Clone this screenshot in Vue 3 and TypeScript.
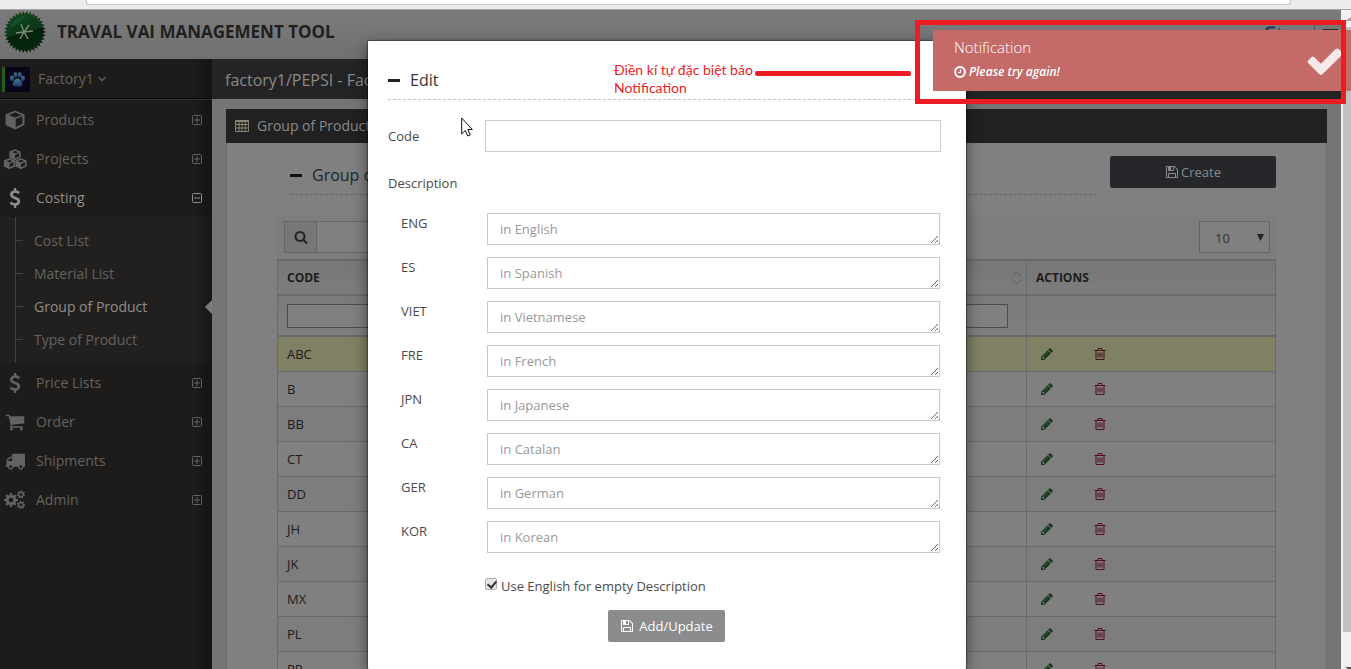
<script setup lang="ts">
import { ref } from 'vue'

interface MenuItem {
  label: string
  icon: string
  open?: boolean
  children?: string[]
}

const menu: MenuItem[] = [
  { label: 'Products', icon: 'cube' },
  { label: 'Projects', icon: 'cubes' },
  {
    label: 'Costing',
    icon: 'dollar',
    open: true,
    children: ['Cost List', 'Material List', 'Group of Product', 'Type of Product'],
  },
  { label: 'Price Lists', icon: 'dollar' },
  { label: 'Order', icon: 'cart' },
  { label: 'Shipments', icon: 'truck' },
  { label: 'Admin', icon: 'cogs' },
]
const activeChild = 'Group of Product'

const codes = ['ABC', 'B', 'BB', 'CT', 'DD', 'JH', 'JK', 'MX', 'PL', 'PP']

const languages = [
  { key: 'ENG', name: 'English' },
  { key: 'ES', name: 'Spanish' },
  { key: 'VIET', name: 'Vietnamese' },
  { key: 'FRE', name: 'French' },
  { key: 'JPN', name: 'Japanese' },
  { key: 'CA', name: 'Catalan' },
  { key: 'GER', name: 'German' },
  { key: 'KOR', name: 'Korean' },
]

const useEnglish = ref(true)
const pageSize = ref('10')

function star(cx: number, cy: number, teeth: number, outer: number, inner: number): string {
  const pts: string[] = []
  for (let i = 0; i < teeth * 2; i++) {
    const r = i % 2 ? inner : outer
    const a = (Math.PI * i) / teeth
    pts.push(`${(cx + r * Math.cos(a)).toFixed(2)} ${(cy + r * Math.sin(a)).toFixed(2)}`)
  }
  return 'M' + pts.join('L') + 'Z'
}

function gear(cx: number, cy: number, teeth: number, outer: number, inner: number, hole: number, turn = 0): string {
  const pts: string[] = []
  const step = (Math.PI * 2) / teeth
  const at = (r: number, a: number) => `${(cx + r * Math.cos(a)).toFixed(2)} ${(cy + r * Math.sin(a)).toFixed(2)}`
  for (let i = 0; i < teeth; i++) {
    const a = i * step + turn
    pts.push(at(inner, a - step * 0.3), at(outer, a - step * 0.2), at(outer, a + step * 0.2), at(inner, a + step * 0.3))
  }
  return `M${pts.join('L')}ZM${cx - hole} ${cy}a${hole} ${hole} 0 1 0 ${hole * 2} 0a${hole} ${hole} 0 1 0 ${-hole * 2} 0Z`
}

const sealPath = star(22, 22, 34, 21, 18)
const cogsPath = gear(7, 11, 8, 7, 5.2, 2.3) + gear(17, 5.5, 7, 4.2, 3, 1.4, 0.3) + gear(17, 16, 7, 4.2, 3, 1.4)

const paths: Record<string, string> = {
  floppy:
    'M512 1536h768v-384h-768v384zm896 0h128v-896q0-14-10-38.5t-20-34.5l-281-281q-10-10-34-20t-39-10v416q0 40-28 68t-68 28h-576q-40 0-68-28t-28-68v-416h-128v1280h128v-416q0-40 28-68t68-28h832q40 0 68 28t28 68v416zm-384-928v-320q0-13-9.5-22.5t-22.5-9.5h-192q-13 0-22.5 9.5t-9.5 22.5v320q0 13 9.5 22.5t22.5 9.5h192q13 0 22.5-9.5t9.5-22.5zm640 32v928q0 40-28 68t-68 28h-1344q-40 0-68-28t-28-68v-1344q0-40 28-68t68-28h928q40 0 88 20t76 48l280 280q28 28 48 76t20 88z',
  check:
    'M1671 566q0 40-28 68l-724 724-136 136q-28 28-68 28t-68-28l-136-136-362-362q-28-28-28-68t28-68l136-136q28-28 68-28t68 28l294 295 656-657q28-28 68-28t68 28l136 136q28 28 28 68z',
  search:
    'M1216 832q0-185-131.5-316.5t-316.5-131.5-316.5 131.5-131.5 316.5 131.5 316.5 316.5 131.5 316.5-131.5 131.5-316.5zm512 832q0 52-38 90t-90 38q-54 0-90-38l-343-342q-179 124-399 124-143 0-273.5-55.5t-225-150-150-225-55.5-273.5 55.5-273.5 150-225 225-150 273.5-55.5 273.5 55.5 225 150 150 225 55.5 273.5q0 220-124 399l343 343q37 37 37 90z',
  pencil:
    'M491 1536l91-91-235-235-91 91v107h128v128h107zm523-928q0-22-22-22-10 0-17 7l-542 542q-7 7-7 17 0 22 22 22 10 0 17-7l542-542q7-7 7-17zm-54-192l416 416-832 832h-416v-416zm683 96q0 53-37 90l-166 166-416-416 166-165q36-38 90-38 53 0 91 38l235 234q37 39 37 91z',
  trash:
    'M704 736v576q0 14-9 23t-23 9h-64q-14 0-23-9t-9-23v-576q0-14 9-23t23-9h64q14 0 23 9t9 23zm256 0v576q0 14-9 23t-23 9h-64q-14 0-23-9t-9-23v-576q0-14 9-23t23-9h64q14 0 23 9t9 23zm256 0v576q0 14-9 23t-23 9h-64q-14 0-23-9t-9-23v-576q0-14 9-23t23-9h64q14 0 23 9t9 23zm128 724v-948h-896v948q0 22 7 40.5t14.5 27 10.5 8.5h832q3 0 10.5-8.5t14.5-27 7-40.5zm-672-1076h448l-48-117q-7-9-17-11h-317q-10 2-17 11zm928 32v64q0 14-9 23t-23 9h-96v948q0 83-47 143.5t-113 60.5h-832q-66 0-113-58.5t-47-141.5v-952h-96q-14 0-23-9t-9-23v-64q0-14 9-23t23-9h309l70-167q15-37 54-63t79-26h320q40 0 79 26t54 63l70 167h309q14 0 23 9t9 23z',
  cart:
    'M704 1536q0 52-38 90t-90 38-90-38-38-90 38-90 90-38 90 38 38 90zm896 0q0 52-38 90t-90 38-90-38-38-90 38-90 90-38 90 38 38 90zm128-1088v512q0 24-16.5 42.5t-40.5 21.5l-1044 122q13 60 13 70 0 16-24 64h920q26 0 45 19t19 45-19 45-45 19h-1024q-26 0-45-19t-19-45q0-11 8-31.5t16-36 21.5-40 15.5-29.5l-177-823h-204q-26 0-45-19t-19-45 19-45 45-19h256q16 0 28.5 6.5t19.5 15.5 13 24.5 8 26 5.5 29.5 4.5 26h1201q26 0 45 19t19 45z',
  truck:
    'M640 1408q0-52-38-90t-90-38-90 38-38 90 38 90 90 38 90-38 38-90zm-384-512h384v-256h-158q-13 0-22 9l-195 195q-9 9-9 22v30zm1280 512q0-52-38-90t-90-38-90 38-38 90 38 90 90 38 90-38 38-90zm256-1088v1024q0 15-4 26.5t-13.5 18.5-16.5 11.5-23.5 6-22.5 2-25.5 0-22.5-.5q0 106-75 181t-181 75-181-75-75-181h-384q0 106-75 181t-181 75-181-75-75-181h-64q-3 0-22.5.5t-25.5 0-22.5-2-23.5-6-16.5-11.5-13.5-18.5-4-26.5q0-26 19-45t45-19v-320q0-8-.5-35t0-38 2.5-34.5 6.5-37 14-30.5 22.5-30l198-198q19-19 50.5-32t58.5-13h160v-192q0-26 19-45t45-19h1024q26 0 45 19t19 45z',
  dollar:
    'M1362 1185q0 153-99.5 263.5t-258.5 136.5v175q0 14-9 23t-23 9h-135q-13 0-22.5-9.5t-9.5-22.5v-175q-66-9-127.5-31t-101.5-44.5-74-48-46.5-37.5-17.5-18q-17-21-2-41l103-135q7-10 23-12 15-2 24 9l2 2q113 99 243 125 37 8 74 8 81 0 142.5-43t61.5-122q0-28-15-53t-33.5-42-58.5-37.5-66-32-80-32.5q-39-16-61.5-25t-61.5-26.5-62.5-31-56.5-35.5-53.5-42.5-43.5-49-35.5-58-21-66.5-8.500-78q0-138 98-242t255-134v-180q0-13 9.500-22.500t22.500-9.500h135q14 0 23 9t9 23v176q57 6 110.500 23t87 33.500 63.500 37.500 39 29 15 14q17 18 5 38l-81 146q-8 15-23 16-14 3-27-7-3-3-14.500-12t-39-26.500-58.500-32-74.500-26-85.500-11.500q-95 0-155 43t-60 111q0 26 8.500 48t29.500 41.500 39.500 33 56 31 60.500 27 70 27.500q53 20 81 31.500t76 35 75.500 42.500 62 50 53 63.500 31.500 76.500 13 94z',
}
</script>

<template>
  <div class="screen">
    <div class="chrome"><div class="address"></div></div>

    <div class="window">
      <div class="app">
        <header class="topbar">
          <svg class="seal" viewBox="0 0 44 44" aria-hidden="true">
            <defs>
              <linearGradient id="seal" x1="0.2" y1="0" x2="0.5" y2="1">
                <stop offset="0" stop-color="#12471f" />
                <stop offset="0.55" stop-color="#0b3617" />
                <stop offset="0.56" stop-color="#04210c" />
                <stop offset="1" stop-color="#06290f" />
              </linearGradient>
            </defs>
            <path :d="sealPath" fill="url(#seal)" />
            <path d="M7 18Q11 6 24 5Q19 12 7 18Z" fill="#1b5e2c" opacity="0.6" />
            <path
              d="M21 22L18 14M21 22L26 15M21 22L30 21M21 22L25 29M21 22L17 29M21 22L13 23"
              stroke="#7c8a76" stroke-width="1.4" fill="none"
            />
          </svg>
          <h1>TRAVAL VAI MANAGEMENT TOOL</h1>
          <div class="tools">
            <button type="button" class="tool" aria-label="Sign out">
              <svg width="20" height="18" viewBox="0 0 20 18">
                <path d="M10 1.500H4.500Q1.500 1.500 1.500 4.500V13Q1.500 16.500 4.500 16.500H10" fill="none" stroke="#1d3350" stroke-width="2" />
                <path d="M14 2l6 6-6 6v-3.500H7v-5h7z" fill="#1d3350" />
              </svg>
            </button>
            <button type="button" class="tool menu-tool" aria-label="Menu">
              <svg width="15" height="12" viewBox="0 0 15 12"><path d="M0 1h15M0 6h15M0 11h15" stroke="#2a2a2a" stroke-width="2" /></svg>
            </button>
          </div>
        </header>

        <div class="body">
          <aside class="sidebar">
            <button type="button" class="account">
              <svg class="avatar" viewBox="0 0 25 25" aria-hidden="true">
                <defs>
                  <linearGradient id="paw" x1="0" y1="0" x2="0" y2="1">
                    <stop offset="0" stop-color="#45808c" />
                    <stop offset="1" stop-color="#1f3372" />
                  </linearGradient>
                </defs>
                <rect width="25" height="25" fill="#080618" />
                <g fill="url(#paw)">
                  <ellipse cx="7" cy="11.500" rx="2" ry="2.800" />
                  <ellipse cx="10.500" cy="8" rx="1.900" ry="2.700" />
                  <ellipse cx="14.800" cy="8" rx="1.900" ry="2.700" />
                  <ellipse cx="18" cy="11.500" rx="1.900" ry="2.800" />
                  <path d="M12.500 11.500q2.500 0 4.300 3.500 1.500 4-1.600 4.500h-5.400q-3.300-.5-1.600-4.500 1.800-3.500 4.300-3.500z" />
                </g>
              </svg>
              <span>Factory1</span>
              <svg width="8" height="6" viewBox="0 0 8 6" aria-hidden="true"><path d="M.5 1l3.500 3.500L7.500 1" fill="none" stroke="currentColor" stroke-width="1.300" /></svg>
            </button>

            <nav>
              <template v-for="item in menu" :key="item.label">
                <a href="#" class="item" :class="{ open: item.open }">
                  <span class="glyph">
                    <svg v-if="item.icon === 'cube'" width="20" height="20" viewBox="0 0 20 20">
                      <path d="M10 1.500L18.500 5v9.500L10 18.500 1.500 14.500V5z" fill="none" stroke="currentColor" stroke-width="1.800" stroke-linejoin="round" />
                      <path d="M1.500 5L10 8.500 18.500 5v9.500L10 18.500V9" fill="none" stroke="currentColor" stroke-width="1.400" />
                      <path d="M10 8.500L1.500 5v9.500L10 18.500z" fill="currentColor" />
                    </svg>
                    <svg v-else-if="item.icon === 'cubes'" width="24" height="20" viewBox="0 0 24 20">
                      <g v-for="(p, i) in [[6.500, 0.500], [1, 9.500], [12.500, 9.500]]" :key="i" :transform="`translate(${p[0]} ${p[1]})`">
                        <path d="M5.500 .5L10.300 2.500V7.500L5.500 9.800.7 7.500V2.500z" fill="none" stroke="currentColor" stroke-width="1.600" stroke-linejoin="round" />
                        <path d="M.7 2.500L5.500 4.700 10.300 2.500" fill="none" stroke="currentColor" stroke-width="1.300" />
                        <path d="M5.500 4.700L.7 2.500v5l4.800 2.300z" fill="currentColor" />
                      </g>
                    </svg>
                    <svg v-else-if="item.icon === 'cogs'" width="22" height="21" viewBox="0 0 22 21">
                      <path :d="cogsPath" fill="currentColor" fill-rule="evenodd" />
                    </svg>
                    <svg v-else width="20" height="20" viewBox="0 0 1792 1792"><path :d="paths[item.icon]" fill="currentColor" /></svg>
                  </span>
                  <span class="label">{{ item.label }}</span>
                  <svg class="toggle" width="10" height="10" viewBox="0 0 10 10" aria-hidden="true">
                    <rect x=".5" y=".5" width="9" height="9" rx="1" fill="none" stroke="currentColor" />
                    <path :d="item.open ? 'M2 5h6' : 'M2 5h6M5 2v6'" stroke="currentColor" />
                  </svg>
                </a>
                <div v-if="item.children" class="submenu">
                  <a v-for="c in item.children" :key="c" href="#" :class="{ active: c === activeChild }">{{ c }}</a>
                </div>
              </template>
            </nav>
          </aside>

          <main class="main">
            <div class="crumbs">factory1/PEPSI - Fac</div>
            <section class="panel">
              <h2 class="panel-head">
                <svg width="14" height="12" viewBox="0 0 14 12" aria-hidden="true">
                  <path d="M.5.500h13v11H.5zM.5 1.500h13M.5 4.500h13M.5 8h13M4 1v10.500M7 1v10.500M10.300 1v10.500" fill="none" stroke="#8a8570" />
                </svg>
                Group of Product
              </h2>
              <div class="panel-body">
                <div class="title-row">
                  <h3 class="title"><i class="dash"></i>Group of Product</h3>
                  <button type="button" class="create">
                    <svg width="14" height="14" viewBox="0 0 1792 1792" aria-hidden="true"><path :d="paths.floppy" fill="currentColor" /></svg>
                    Create
                  </button>
                </div>

                <div class="toolbar">
                  <label class="search">
                    <span class="addon"><svg width="14" height="14" viewBox="0 0 1792 1792"><path :d="paths.search" fill="currentColor" /></svg></span>
                    <input type="search" aria-label="Search" />
                  </label>
                  <span class="size">
                    <select v-model="pageSize" aria-label="Rows per page"><option>10</option></select>
                    <svg width="7" height="7" viewBox="0 0 7 7" aria-hidden="true"><path d="M0 0h7L3.500 7z" fill="#222" /></svg>
                  </span>
                </div>

                <table>
                  <thead>
                    <tr class="heads">
                      <th class="c-code">CODE</th>
                      <th class="c-desc">
                        <svg width="11" height="14" viewBox="0 0 11 14" aria-label="Sort"><path d="M1 5.500L5.500 1 10 5.500M1 8.500L5.500 13 10 8.500" fill="none" stroke="#616161" /></svg>
                      </th>
                      <th class="c-act">ACTIONS</th>
                    </tr>
                    <tr class="filters">
                      <td><input type="text" aria-label="Filter code" /></td>
                      <td><input type="text" aria-label="Filter description" /></td>
                      <td></td>
                    </tr>
                  </thead>
                  <tbody>
                    <tr v-for="(code, i) in codes" :key="code" :class="{ picked: i === 0 }">
                      <td>{{ code }}</td>
                      <td></td>
                      <td>
                        <div class="acts">
                          <button type="button" class="edit" aria-label="Edit row">
                            <svg width="14" height="14" viewBox="0 0 1792 1792"><path :d="paths.pencil" fill="currentColor" /></svg>
                          </button>
                          <button type="button" class="del" aria-label="Delete row">
                            <svg width="14" height="14" viewBox="0 0 1792 1792"><path :d="paths.trash" fill="currentColor" /></svg>
                          </button>
                        </div>
                      </td>
                    </tr>
                  </tbody>
                </table>
              </div>
            </section>
          </main>
        </div>
      </div>

      <div class="scrollbar" aria-hidden="true">
        <i class="up"></i>
        <div class="thumb"></div>
        <i class="down"></i>
      </div>
    </div>

    <div class="overlay">
      <form class="modal" role="dialog" aria-label="Edit" @submit.prevent>
        <h3 class="title"><i class="dash"></i>Edit</h3>
        <div class="code-row">
          <label for="code">Code</label>
          <input id="code" type="text" />
        </div>
        <p class="group-label">Description</p>
        <div class="langs">
          <div v-for="l in languages" :key="l.key" class="lang">
            <label :for="'d-' + l.key">{{ l.key }}</label>
            <textarea :id="'d-' + l.key" rows="1" :placeholder="'in ' + l.name"></textarea>
          </div>
        </div>
        <label class="check">
          <input v-model="useEnglish" type="checkbox" />
          <span>Use English for empty Description</span>
        </label>
        <div class="submit-row">
          <button type="submit" class="submit">
            <svg width="14" height="14" viewBox="0 0 1792 1792" aria-hidden="true"><path :d="paths.floppy" fill="currentColor" /></svg>
            Add/Update
          </button>
        </div>
      </form>
    </div>

    <div class="toast" role="alert">
      <div>
        <div class="toast-title">Notification</div>
        <div class="toast-text">
          <svg width="12" height="12" viewBox="0 0 12 12" aria-hidden="true">
            <circle cx="6" cy="6" r="4.900" fill="none" stroke="#fff" stroke-width="2" />
            <path d="M6.500 3.200V6.500H4" fill="none" stroke="#fff" stroke-width="1.200" />
          </svg>
          Please try again!
        </div>
      </div>
      <svg class="tick" width="40" height="40" viewBox="0 0 1792 1792" aria-hidden="true"><path :d="paths.check" fill="#f8e9e9" /></svg>
    </div>

    <div class="frame"></div>
    <div class="note">Điền kí tự đặc biệt báo<br />Notification</div>
    <div class="pointer-line"></div>
    <svg class="cursor" width="12" height="20" viewBox="0 0 12 20" aria-hidden="true">
      <path d="M.7 1v16l3.600-3.500 2.500 5.500 2.400-1-2.400-5.500h4.500z" fill="#fff" stroke="#111" stroke-linejoin="round" />
    </svg>
  </div>
</template>

<style>
body {
  margin: 0;
}
</style>

<style scoped>
* {
  box-sizing: border-box;
}
.screen {
  position: relative;
  display: flex;
  flex-direction: column;
  height: 100vh;
  overflow: hidden;
  font: 13px/20px 'Open Sans', 'Noto Sans', sans-serif;
  color: #4a4a4a;
}
h1, h2, h3, p {
  margin: 0;
  font-weight: 400;
}
a {
  color: inherit;
  text-decoration: none;
}
button, input, select, textarea {
  font: inherit;
  color: inherit;
}
button {
  padding: 0;
  border: 0;
  background: none;
}
svg {
  flex: none;
  display: block;
}

.chrome {
  flex: none;
  height: 10px;
  padding: 0 60px 0 86px;
  background: #ececec;
  border-bottom: 1px solid #a3a3a3;
}
.address {
  height: 5px;
  background: #fff;
  border: 1px solid #c4c4c4;
  border-top: 0;
  border-radius: 0 0 3px 3px;
}
.window {
  flex: 1;
  min-height: 0;
  display: flex;
}
.app {
  flex: 1;
  min-width: 0;
  display: flex;
  flex-direction: column;
  overflow: hidden;
}
.topbar {
  flex: none;
  display: flex;
  align-items: center;
  height: 49px;
  padding: 0 3px;
  background: linear-gradient(#7b7b7b, #707070);
}
.seal {
  width: 44px;
  height: 44px;
  margin-bottom: 5px;
}
h1 {
  margin: 0 auto 5px 10px;
  font-size: 17px;
  font-weight: 700;
  color: #1f1f1f;
}
.tools {
  display: flex;
  align-items: center;
  height: 100%;
}
.tool {
  height: 20px;
  padding: 0 29px 0 0;
}
.menu-tool {
  height: 30px;
  padding: 0 0 0 8px;
  border-left: 1px solid #585858;
}

.body {
  flex: 1;
  min-height: 0;
  display: flex;
}
.sidebar {
  flex: none;
  width: 212px;
  background: linear-gradient(90deg, transparent 195px, rgba(0, 0, 0, 0.3)), #1d1c1a;
  color: #646260;
  font-size: 14px;
}
.account {
  display: flex;
  align-items: center;
  gap: 4px;
  width: 100%;
  height: 41px;
  padding: 0 2px;
  border-bottom: 1px solid #343230;
  box-shadow: inset 0 -1px #090909;
  font-size: 14px;
  color: #646260;
}
.avatar {
  width: 28px;
  height: 25px;
  margin-right: 4px;
  border-left: 3px solid #235d18;
}
.item {
  display: flex;
  align-items: center;
  height: 39px;
  padding-right: 10px;
}
.glyph {
  display: flex;
  justify-content: center;
  width: 30px;
  margin-right: 6px;
}
.label {
  flex: 1;
}
.item.open {
  color: #8f8d8b;
}
.submenu {
  position: relative;
  padding: 7px 0;
  background: linear-gradient(90deg, transparent 195px, rgba(0, 0, 0, 0.3)), #21201e;
}
.submenu::before {
  content: '';
  position: absolute;
  inset: 0 auto 0 15px;
  width: 1px;
  background: #444240;
}
.submenu a {
  position: relative;
  display: flex;
  align-items: center;
  height: 33px;
  padding-left: 34px;
}
.submenu a::before {
  content: '';
  position: absolute;
  left: 16px;
  top: 16px;
  width: 7px;
  height: 1px;
  background: #444240;
}
.submenu a.active {
  color: #8f8d8b;
}
.submenu a.active::after {
  content: '';
  position: absolute;
  right: 0;
  top: 10px;
  border: 7px solid transparent;
  border-left: 0;
  border-right-color: #7c7c7c;
}

.main {
  flex: 1;
  min-width: 0;
  background: #757575;
}
.crumbs {
  height: 40px;
  padding: 0 13px;
  background: #242424;
  color: #8a8a8a;
  font-size: 16px;
  line-height: 42px;
}
.panel {
  margin: 10px 14px 0;
}
.panel-head {
  display: flex;
  align-items: center;
  gap: 8px;
  height: 34px;
  padding: 0 9px;
  background: #212121;
  color: #8a8a8a;
  font-size: 14px;
}
.panel-body {
  padding: 13px 50px 0;
  background: #808080;
  border: solid #6a6a6a;
  border-width: 0 1px;
}
.title {
  display: flex;
  align-items: center;
  gap: 10px;
  height: 39px;
  border-bottom: 1px dashed #c4c4c4;
  font-size: 16px;
  color: #333;
}
.dash {
  width: 12px;
  height: 3px;
  background: #222;
}
.title-row {
  display: flex;
  align-items: flex-start;
  gap: 13px;
  padding-left: 13px;
  margin-bottom: 20px;
}
.title-row .title {
  flex: 1;
  border-color: #656565;
  color: #1b2633;
}
.title-row .dash {
  background: #111;
}
.create {
  display: flex;
  align-items: center;
  justify-content: center;
  gap: 2px;
  width: 166px;
  height: 32px;
  border-radius: 2px;
  background: #25272a;
  color: #8a8a8a;
}
.toolbar {
  display: flex;
  justify-content: space-between;
  align-items: center;
  height: 44px;
  padding: 0 6px 0 7px;
  background: #7d7d7d;
}
.search {
  display: flex;
  width: 300px;
  height: 32px;
  border: 1px solid #666;
}
.addon {
  display: flex;
  align-items: center;
  justify-content: center;
  width: 32px;
  border-right: 1px solid #666;
  background: #777;
  color: #252525;
}
.search input {
  flex: 1;
  min-width: 0;
  border: 0;
  background: #808080;
}
.size {
  position: relative;
}
.size select {
  display: block;
  appearance: none;
  width: 71px;
  height: 32px;
  padding: 2px 15px 0;
  border: 1px solid #666;
  border-radius: 0;
  background: #808080;
  color: #303030;
}
.size svg {
  position: absolute;
  right: 6px;
  top: 13px;
}

table {
  width: 100%;
  table-layout: fixed;
  border-spacing: 0;
  border: solid #6a6a6a;
  border-width: 2px 1px 0;
  color: #1c1c1c;
}
th, td {
  padding: 0 9px;
  border-bottom: 1px solid #6a6a6a;
  text-align: left;
}
th:last-child, td:last-child {
  border-left: 1px solid #6a6a6a;
}
.c-code {
  width: 24%;
}
.c-act {
  width: 249px;
}
.heads th {
  height: 35px;
  border-bottom-width: 2px;
  background: linear-gradient(#777, #7d7d7d);
  font-size: 12px;
  font-weight: 700;
}
.heads .c-desc {
  padding-right: 4px;
}
.c-desc svg {
  margin-left: auto;
}
.filters td {
  height: 41px;
  border-bottom-width: 2px;
  background: linear-gradient(#7a7a7a, #7f7f7f);
}
.filters input {
  display: block;
  width: 100%;
  height: 24px;
  border: 1px solid #4c4c4c;
  background: #808080;
}
.filters td:nth-child(2) {
  padding-right: 18px;
}
tbody td {
  height: 35px;
  background: #808080;
}
tbody tr:nth-child(odd) td {
  background: #7d7d7d;
}
tbody tr.picked td {
  background: #808064;
}
.acts {
  display: flex;
  gap: 39px;
  padding-left: 4px;
}
.edit {
  color: #1a3a1f;
}
.del {
  color: #560a1c;
}
.picked .del {
  color: #3f1216;
}

.scrollbar {
  flex: none;
  display: flex;
  flex-direction: column;
  width: 10px;
  padding-left: 2px;
  background: #f1f1f1;
  overflow: hidden;
}
.up, .down {
  flex: none;
  height: 4px;
  margin: 7px 0 6px 2px;
  border: 6px solid transparent;
  border-top: 0;
  border-bottom: 4px solid #a3a3a3;
}
.down {
  margin: 0 0 -2px 2px;
  border-bottom: 0;
  border-top: 4px solid #505050;
}
.thumb {
  flex: 1;
  margin-bottom: 35px;
  background: #c1c1c1;
}

.overlay {
  position: absolute;
  inset: 10px 17px 0 0;
  display: flex;
  justify-content: center;
  padding-top: 31px;
}
.modal {
  width: 598px;
  padding: 20px 25px 0 20px;
  background: #fff;
  border-radius: 1px;
  box-shadow: 0 0 1px 1px rgba(0, 0, 0, 0.35), 0 5px 15px rgba(0, 0, 0, 0.5);
}
.modal .title {
  margin-bottom: 20px;
}
.code-row {
  display: flex;
  align-items: center;
}
.code-row label {
  width: 97px;
}
.code-row input {
  flex: 1;
  height: 32px;
  border: 1px solid #ccc;
}
.group-label {
  margin: 21px 0 20px;
}
.langs {
  display: flex;
  flex-direction: column;
  gap: 12px;
  padding: 0 1px 0 13px;
}
.lang {
  display: flex;
  align-items: flex-start;
}
.lang label {
  width: 86px;
}
.lang textarea {
  flex: 1;
  height: 32px;
  padding: 5px 12px;
  border: 1px solid #c8c8c8;
  border-radius: 0;
  line-height: 20px;
  overflow: hidden;
  resize: vertical;
}
.lang textarea::placeholder {
  color: #999;
}
.check {
  display: flex;
  gap: 4px;
  margin: 23px 0 14px 97px;
}
.check input {
  appearance: none;
  width: 12px;
  height: 12px;
  margin: 2px 0 0;
  border: 1px solid #b0b0b0;
  border-radius: 2px;
  background: #e6e6e6;
}
.check input:checked::after {
  content: '';
  display: block;
  width: 4px;
  height: 7px;
  margin: 0 3px;
  border: solid #333;
  border-width: 0 2px 2px 0;
  transform: rotate(40deg);
}
.submit-row {
  display: flex;
  justify-content: center;
  padding-left: 4px;
}
.submit {
  display: flex;
  align-items: center;
  gap: 5px;
  height: 32px;
  padding: 0 12px;
  border-radius: 2px;
  background: #8b8c8e;
  color: #fff;
}

.toast {
  position: absolute;
  top: 30px;
  right: 0;
  display: flex;
  justify-content: space-between;
  width: 418px;
  height: 61px;
  padding: 7px 6px 0 21px;
  background: #c46a69;
  color: #fff;
}
.toast-title {
  font-size: 15px;
  font-weight: 300;
}
.toast-text {
  display: flex;
  align-items: center;
  gap: 3px;
  margin-top: 5px;
  font-size: 12px;
  font-style: italic;
  font-weight: 600;
}
.tick {
  margin-top: 4px;
}
.frame {
  position: absolute;
  top: 20px;
  right: 5px;
  width: 431px;
  height: 84px;
  border: 5px solid #ed1c24;
}
.note {
  position: absolute;
  left: 614px;
  top: 61px;
  color: #ed1c24;
  font: 14px/18px Lato, 'Noto Sans', sans-serif;
}
.pointer-line {
  position: absolute;
  left: 755px;
  top: 71px;
  width: 156px;
  height: 5px;
  border-radius: 2px;
  background: #ed1c24;
}
.cursor {
  position: absolute;
  left: 461px;
  top: 117px;
}
</style>
